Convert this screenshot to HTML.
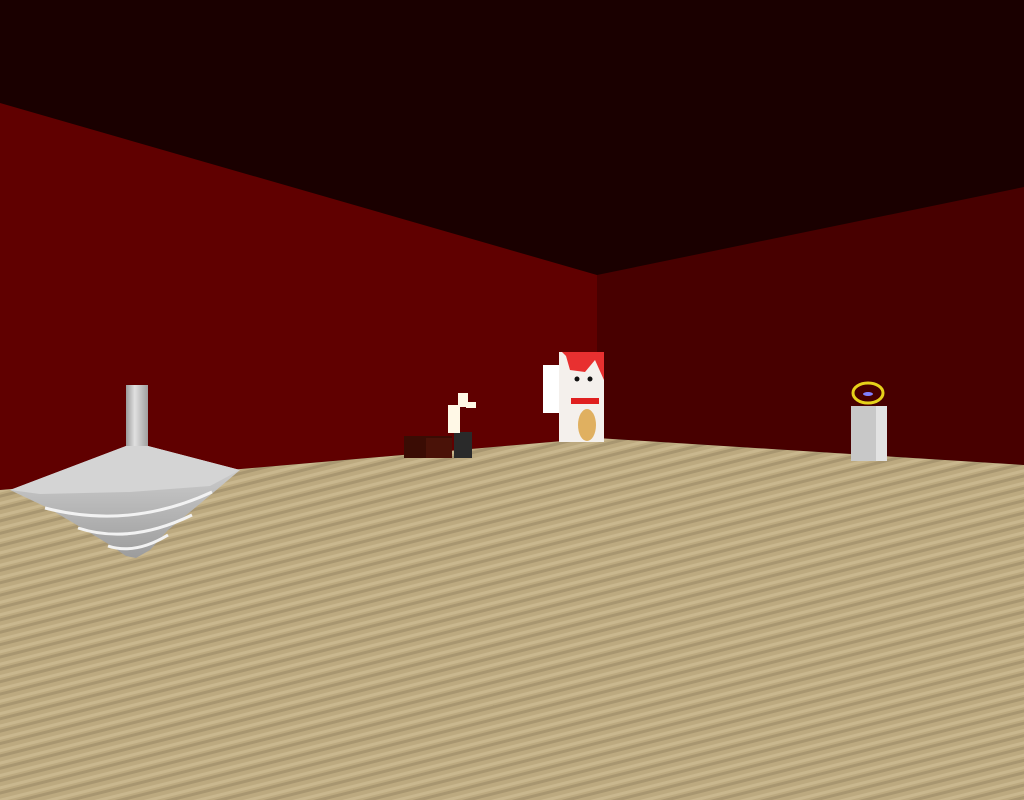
<!DOCTYPE html>
<html><head><meta charset="utf-8"><style>html,body{margin:0;padding:0;background:#1a0000;overflow:hidden}svg{display:block}</style></head>
<body>
<svg width="1024" height="800" viewBox="0 0 1024 800" xmlns="http://www.w3.org/2000/svg">
<defs>
<pattern id="tat" width="1024" height="12" patternUnits="userSpaceOnUse" patternTransform="rotate(-14)">
<rect width="1024" height="12" fill="#bca97f"/>
<rect y="0" width="1024" height="3" fill="#a89670"/>
<rect y="7" width="1024" height="3" fill="#c9b78e"/>
</pattern>
<linearGradient id="spin" x1="0" x2="1"><stop offset="0" stop-color="#9a9a9a"/><stop offset="0.4" stop-color="#e0e0e0"/><stop offset="1" stop-color="#a0a0a0"/></linearGradient>
<linearGradient id="spinB" x1="0" y1="0" x2="0" y2="1"><stop offset="0" stop-color="#d8d8d8"/><stop offset="1" stop-color="#9c9c9c"/></linearGradient>
</defs>
<rect width="1024" height="800" fill="#1a0000"/>
<polygon points="0,103 597,275 597,438 0,490" fill="#600000"/>
<polygon points="597,275 1024,187 1024,465 597,438" fill="#480000"/>
<polygon points="0,490 597,438 1024,465 1024,800 0,800" fill="url(#tat)"/>
<!-- spinning top -->
<rect x="126" y="385" width="22" height="62" fill="url(#spin)"/>
<polygon points="126,446 148,446 240,470 214,492 190,512 168,530 150,550 136,558 126,556 110,545 82,528 48,508 10,490" fill="url(#spinB)"/>
<polygon points="126,446 148,446 240,470 210,486 130,492 40,494 10,490" fill="#d4d4d4"/>
<path d="M45,508 Q130,530 212,492 M78,528 Q130,545 192,515 M108,546 Q135,555 168,535" stroke="#f2f2f2" stroke-width="3" fill="none"/>
<!-- box objects -->
<rect x="404" y="436" width="48" height="22" fill="#3a0c04"/>
<rect x="426" y="438" width="26" height="20" fill="#4a1208"/>
<rect x="454" y="432" width="18" height="26" fill="#2a2a2a"/>
<rect x="448" y="405" width="12" height="28" fill="#fff8e6"/>
<rect x="458" y="393" width="10" height="14" fill="#fff8e6"/>
<rect x="466" y="402" width="10" height="6" fill="#fff8e6"/>
<!-- maneki neko -->
<rect x="543" y="365" width="20" height="48" fill="#fff"/>
<rect x="559" y="352" width="45" height="90" fill="#f4f0ec"/>
<path d="M562,352 L604,352 L604,380 L595,360 L585,372 L570,370 L566,356Z" fill="#e83030"/>
<circle cx="577" cy="379" r="2.5" fill="#111"/><circle cx="590" cy="379" r="2.5" fill="#111"/>
<rect x="571" y="398" width="28" height="6" fill="#e02020"/>
<ellipse cx="587" cy="425" rx="9" ry="16" fill="#e0b060"/>
<!-- pedestal -->
<rect x="851" y="406" width="36" height="55" fill="#c8c8c8"/>
<rect x="876" y="406" width="11" height="55" fill="#e2e2e2"/>
<ellipse cx="868" cy="393" rx="15" ry="10" fill="none" stroke="#e6d21a" stroke-width="3"/>
<ellipse cx="868" cy="394" rx="5" ry="2" fill="#8080ff"/>
</svg>
</body></html>
